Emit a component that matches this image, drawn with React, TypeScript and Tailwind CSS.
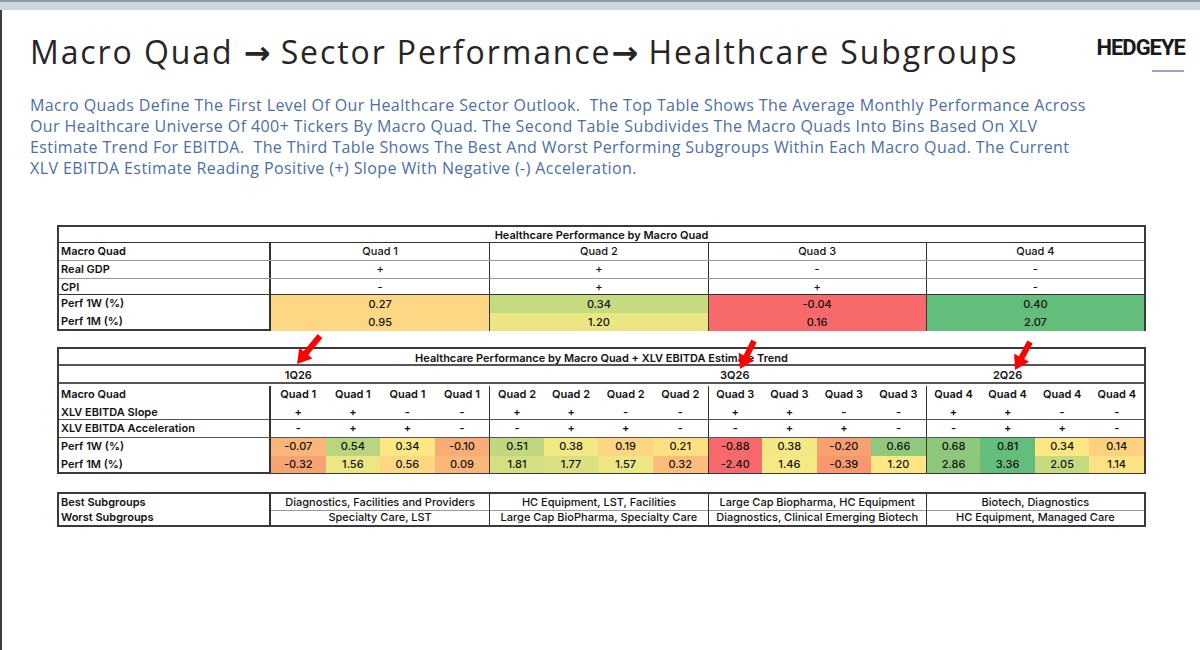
import React from "react";

const F = { fontFamily: '"Open Sans", "Noto Sans", sans-serif' } as const;
const TF = { fontFamily: 'Inter, "Open Sans", sans-serif' } as const;
const AR = { fontFamily: '"DejaVu Sans", sans-serif' } as const;

type Cell = { v: string; bg?: string };

const t1 = [
  { label: "Macro Quad", cells: ["Quad 1", "Quad 2", "Quad 3", "Quad 4"], cls: "h-[18px] border-b border-[#9a9a9a]" },
  { label: "Real GDP", cells: ["+", "+", "-", "-"], cls: "h-[18px] border-b border-[#9a9a9a]" },
  { label: "CPI", cells: ["-", "+", "+", "-"], cls: "h-[16px] border-b border-[#333]" },
];
const t1perf = [
  { label: "Perf 1W (%)", cls: "h-[18px]", cells: [{ v: "0.27", bg: "bg-[#fdd783]" }, { v: "0.34", bg: "bg-[#c6da7f]" }, { v: "-0.04", bg: "bg-[#f8696b]" }, { v: "0.40", bg: "bg-[#63be7b]" }] as Cell[] },
  { label: "Perf 1M (%)", cls: "h-[16px]", cells: [{ v: "0.95", bg: "bg-[#fdd783]" }, { v: "1.20", bg: "bg-[#ebe583]" }, { v: "0.16", bg: "bg-[#f8696b]" }, { v: "2.07", bg: "bg-[#63be7b]" }] as Cell[] },
];

const quads = ["Quad 1", "Quad 1", "Quad 1", "Quad 1", "Quad 2", "Quad 2", "Quad 2", "Quad 2", "Quad 3", "Quad 3", "Quad 3", "Quad 3", "Quad 4", "Quad 4", "Quad 4", "Quad 4"];
const slope = ["+", "+", "-", "-", "+", "+", "-", "-", "+", "+", "-", "-", "+", "+", "-", "-"];
const accel = ["-", "+", "+", "-", "-", "+", "+", "-", "-", "+", "+", "-", "-", "+", "+", "-"];
const p1w: Cell[] = [
  { v: "-0.07", bg: "bg-[#fab578]" }, { v: "0.54", bg: "bg-[#b9d57f]" }, { v: "0.34", bg: "bg-[#fde883]" }, { v: "-0.10", bg: "bg-[#f9ad75]" },
  { v: "0.51", bg: "bg-[#c0d780]" }, { v: "0.38", bg: "bg-[#f1e884]" }, { v: "0.19", bg: "bg-[#fed580]" }, { v: "0.21", bg: "bg-[#fee082]" },
  { v: "-0.88", bg: "bg-[#f8696b]" }, { v: "0.38", bg: "bg-[#f3e884]" }, { v: "-0.20", bg: "bg-[#f9a070]" }, { v: "0.66", bg: "bg-[#90c97d]" },
  { v: "0.68", bg: "bg-[#8dc87c]" }, { v: "0.81", bg: "bg-[#63be7b]" }, { v: "0.34", bg: "bg-[#fee783]" }, { v: "0.14", bg: "bg-[#fdd27f]" },
];
const p1m: Cell[] = [
  { v: "-0.32", bg: "bg-[#f9a372]" }, { v: "1.56", bg: "bg-[#ece683]" }, { v: "0.56", bg: "bg-[#fed880]" }, { v: "0.09", bg: "bg-[#fab878]" },
  { v: "1.81", bg: "bg-[#d4df81]" }, { v: "1.77", bg: "bg-[#dbe182]" }, { v: "1.57", bg: "bg-[#ece683]" }, { v: "0.32", bg: "bg-[#fbbd79]" },
  { v: "-2.40", bg: "bg-[#f8696b]" }, { v: "1.46", bg: "bg-[#f6e984]" }, { v: "-0.39", bg: "bg-[#f9986e]" }, { v: "1.20", bg: "bg-[#fee783]" },
  { v: "2.86", bg: "bg-[#8cc87c]" }, { v: "3.36", bg: "bg-[#63be7b]" }, { v: "2.05", bg: "bg-[#c6db80]" }, { v: "1.14", bg: "bg-[#fee283]" },
];

const best = ["Diagnostics, Facilities and Providers", "HC Equipment, LST, Facilities", "Large Cap Biopharma, HC Equipment", "Biotech, Diagnostics"];
const worst = ["Specialty Care, LST", "Large Cap BioPharma, Specialty Care", "Diagnostics, Clinical Emerging Biotech", "HC Equipment, Managed Care"];

function groupBorder(i: number) {
  return i === 4 || i === 8 || i === 12 ? "border-l border-[#333]" : "";
}

function Arrow({ tip, tail }: { tip: [number, number]; tail: [number, number] }) {
  const dx = tail[0] - tip[0];
  const dy = tail[1] - tip[1];
  const len = Math.hypot(dx, dy);
  const ux = dx / len;
  const uy = dy / len;
  const px = -uy;
  const py = ux;
  const head = 14;
  const hw = 8.5;
  const sw = 3;
  const bx = tip[0] + ux * head;
  const by = tip[1] + uy * head;
  const pts = [
    [tip[0], tip[1]],
    [bx + px * hw, by + py * hw],
    [bx + px * sw, by + py * sw],
    [tail[0] + px * sw, tail[1] + py * sw],
    [tail[0] - px * sw, tail[1] - py * sw],
    [bx - px * sw, by - py * sw],
    [bx - px * hw, by - py * hw],
  ]
    .map((p) => p.join(","))
    .join(" ");
  return <polygon points={pts} fill="#ff0000" />;
}

export default function App() {
  return (
    <div className="relative w-[1200px] h-[650px] overflow-hidden bg-white text-[#222]" style={F}>
      <div className="h-[10px] bg-[#c9d7e0] border-t-2 border-[#8e9ba5]" />
      <div className="h-[640px] border-l-2 border-[#3c3c3c]">
        <div className="flex items-start justify-between pt-[22px] pl-[28px] pr-[15px]">
          <h1 className="text-[32px] leading-[40px] tracking-[1.9px] text-[#262626] whitespace-nowrap">
            Macro Quad <span style={AR} className="tracking-normal font-bold">→</span> Sector Performance<span style={AR} className="tracking-normal font-bold">→</span> Healthcare Subgroups
          </h1>
          <div className="flex flex-col items-end pt-[3px]">
            <div className="text-[22px] leading-[26px] font-bold tracking-[-1px] text-[#1a1a1a]" style={{ fontFamily: 'Roboto, "Liberation Sans", sans-serif' }}>
              HEDGEYE
            </div>
            <div className="mt-[9px] mr-[1px] w-[32px] h-[2px] bg-[#94a6c2]" />
          </div>
        </div>
        <p className="mt-[22px] pl-[28px] text-[16px] leading-[21px] text-[#4b6fa6] whitespace-pre tracking-[0.4px]">
          {"Macro Quads Define The First Level Of Our Healthcare Sector Outlook.  The Top Table Shows The Average Monthly Performance Across\nOur Healthcare Universe Of 400+ Tickers By Macro Quad. The Second Table Subdivides The Macro Quads Into Bins Based On XLV\nEstimate Trend For EBITDA.  The Third Table Shows The Best And Worst Performing Subgroups Within Each Macro Quad. The Current\nXLV EBITDA Estimate Reading Positive (+) Slope With Negative (-) Acceleration."}
        </p>

        <div style={TF}>
          {/* Table 1 */}
          <div className="mt-[46px] ml-[55px] w-[1089px] border-2 border-[#3a3a3a] text-[11px] leading-[16px] text-[#111] font-medium">
            <div className="h-[16px] border-b border-[#333] text-center font-semibold">Healthcare Performance by Macro Quad</div>
            {t1.map((r) => (
              <div key={r.label} className={`grid grid-cols-[212px_repeat(4,minmax(0,1fr))] ${r.cls}`}>
                <div className="pl-[2px] font-semibold border-r-2 border-[#333]">{r.label}</div>
                {r.cells.map((c, i) => (
                  <div key={i} className={`text-center ${i > 0 ? "border-l border-[#333]" : ""}`}>{c}</div>
                ))}
              </div>
            ))}
            {t1perf.map((r) => (
              <div key={r.label} className={`grid grid-cols-[212px_repeat(4,minmax(0,1fr))] ${r.cls}`}>
                <div className="pl-[2px] font-semibold border-r-2 border-[#333]">{r.label}</div>
                {r.cells.map((c, i) => (
                  <div key={i} className={`text-center leading-[18px] ${c.bg} ${i > 0 ? "border-l border-[#333]" : ""}`}>{c.v}</div>
                ))}
              </div>
            ))}
          </div>

          {/* Table 2 */}
          <div className="mt-[16px] ml-[55px] w-[1089px] border-2 border-[#3a3a3a] text-[11px] leading-[17px] text-[#111] font-medium">
            <div className="h-[17px] pt-[1px] border-b-2 border-[#555] text-center font-semibold">
              Healthcare Performance by Macro Quad + XLV EBITDA Estimate Trend
            </div>
            <div className="grid grid-cols-[212px_repeat(16,minmax(0,1fr))] h-[18px] pt-[1px] border-b-2 border-[#555] font-semibold">
              <div />
              <div className="text-center">1Q26</div>
              <div /><div /><div /><div /><div /><div /><div />
              <div className="text-center">3Q26</div>
              <div /><div /><div /><div />
              <div className="text-center">2Q26</div>
              <div /><div />
            </div>
            <div className="grid grid-cols-[212px_repeat(16,minmax(0,1fr))] h-[20px] pt-[2px] font-semibold">
              <div className="pl-[2px] border-r-2 border-[#333]">Macro Quad</div>
              {quads.map((q, i) => (
                <div key={i} className={`text-center ${groupBorder(i)}`}>{q}</div>
              ))}
            </div>
            <div className="grid grid-cols-[212px_repeat(16,minmax(0,1fr))] h-[16px] border-b border-[#555]">
              <div className="pl-[2px] font-semibold border-r-2 border-[#333]">XLV EBITDA  Slope</div>
              {slope.map((q, i) => (
                <div key={i} className={`text-center font-semibold ${groupBorder(i)}`}>{q}</div>
              ))}
            </div>
            <div className="grid grid-cols-[212px_repeat(16,minmax(0,1fr))] h-[18px] border-b border-[#555]">
              <div className="pl-[2px] font-semibold border-r-2 border-[#333]">XLV EBITDA Acceleration</div>
              {accel.map((q, i) => (
                <div key={i} className={`text-center font-semibold ${groupBorder(i)}`}>{q}</div>
              ))}
            </div>
            {[
              { label: "Perf 1W (%)", cells: p1w, cls: "h-[18px]" },
              { label: "Perf 1M (%)", cells: p1m, cls: "h-[16px]" },
            ].map((r) => (
              <div key={r.label} className={`grid grid-cols-[212px_repeat(16,minmax(0,1fr))] ${r.cls}`}>
                <div className="pl-[2px] font-semibold border-r-2 border-[#333]">{r.label}</div>
                {r.cells.map((c, i) => (
                  <div key={i} className={`text-center ${c.bg} ${groupBorder(i)}`}>{c.v}</div>
                ))}
              </div>
            ))}
          </div>

          {/* Table 3 */}
          <div className="mt-[18px] ml-[55px] w-[1089px] border-2 border-[#3a3a3a] text-[11px] leading-[16px] text-[#111] font-medium">
            <div className="grid grid-cols-[212px_repeat(4,minmax(0,1fr))] h-[16px]">
              <div className="pl-[2px] font-semibold border-r-2 border-[#333]">Best Subgroups</div>
              {best.map((c, i) => (
                <div key={i} className={`text-center border-b border-[#9a9a9a] ${i > 0 ? "border-l border-l-[#333]" : ""}`}>{c}</div>
              ))}
            </div>
            <div className="grid grid-cols-[212px_repeat(4,minmax(0,1fr))] h-[15px]">
              <div className="pl-[2px] font-semibold border-r-2 border-[#333] leading-[15px]">Worst Subgroups</div>
              {worst.map((c, i) => (
                <div key={i} className={`text-center leading-[15px] ${i > 0 ? "border-l border-[#333]" : ""}`}>{c}</div>
              ))}
            </div>
          </div>
        </div>
      </div>

      <svg className="absolute left-0 top-0 pointer-events-none" width="1200" height="650" viewBox="0 0 1200 650">
        <Arrow tip={[297, 364]} tail={[320, 336]} />
        <Arrow tip={[740, 369]} tail={[754, 341]} />
        <Arrow tip={[1015, 370]} tail={[1030, 342]} />
      </svg>
    </div>
  );
}
